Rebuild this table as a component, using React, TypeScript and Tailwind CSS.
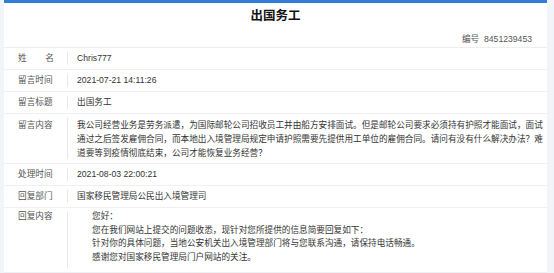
import React from "react";

const font = { fontFamily: '"Liberation Sans", "Noto Sans CJK SC", sans-serif' };

function Row({ label, children, multi = false, spread = false, pt = "pt-[4px]", pb = "pb-[3px]", lh = "leading-[14px]" }: { label: string; children: React.ReactNode; multi?: boolean; spread?: boolean; pt?: string; pb?: string; lh?: string }) {
  return (
    <div className={`flex border-b border-[#eef0f3] ${multi ? "" : "h-[22px] items-center"}`}>
      <div className={`w-[63px] shrink-0 pl-[14px] ${multi ? `${pt} ${lh}` : ""}`}>
        {spread ? (
          <div className="w-[36px] flex justify-between text-[#555]">
            {label.split("").map((c, i) => (
              <span key={i}>{c}</span>
            ))}
          </div>
        ) : (
          <div className="text-[#555]">{label}</div>
        )}
      </div>
      <div className="w-px bg-[#e6e8eb] self-stretch my-[4px]" />
      <div className={`flex-1 pl-[9px] pr-[2px] text-[#333] ${multi ? `${pt} ${pb} ${lh}` : ""}`}>{children}</div>
    </div>
  );
}

export default function App() {
  return (
    <div className="w-[554px] h-[273px] overflow-hidden bg-[#f1f4f9] pl-[4px] pr-[7px] text-[8.65px]" style={font}>
      <div className="bg-white h-full border-t-[3px] border-[#2f7cd9]">
        <div className="h-[45px] border-b border-[#eceef1] flex flex-col">
          <div className="mt-[5px] text-center text-[12.5px] font-bold text-[#111] leading-[16px]">出国务工</div>
          <div className="mt-[9px] text-right pr-[15px] text-[#555] leading-[12px]">
            编号&nbsp;&nbsp;8451239453
          </div>
        </div>
        <Row label="姓名" spread>Chris777</Row>
        <Row label="留言时间">2021-07-21 14:11:26</Row>
        <Row label="留言标题">出国务工</Row>
        <Row label="留言内容" multi>
          我公司经营业务是劳务派遣，为国际邮轮公司招收员工并由船方安排面试。但是邮轮公司要求必须持有护照才能面试，面试通过之后签发雇佣合同，而本地出入境管理局规定申请护照需要先提供用工单位的雇佣合同。请问有没有什么解决办法？难道要等到疫情彻底结束，公司才能恢复业务经营？
        </Row>
        <Row label="处理时间">2021-08-03 22:00:21</Row>
        <Row label="回复部门">国家移民管理局公民出入境管理司</Row>
        <Row label="回复内容" multi pt="pt-[2px]" pb="pb-[8px]" lh="leading-[13.5px]">
          <div className="pl-[15px]">
            <div>您好：</div>
            <div>您在我们网站上提交的问题收悉，现针对您所提供的信息简要回复如下：</div>
            <div>针对你的具体问题，当地公安机关出入境管理部门将与您联系沟通，请保持电话畅通。</div>
            <div>感谢您对国家移民管理局门户网站的关注。</div>
          </div>
        </Row>
      </div>
    </div>
  );
}
